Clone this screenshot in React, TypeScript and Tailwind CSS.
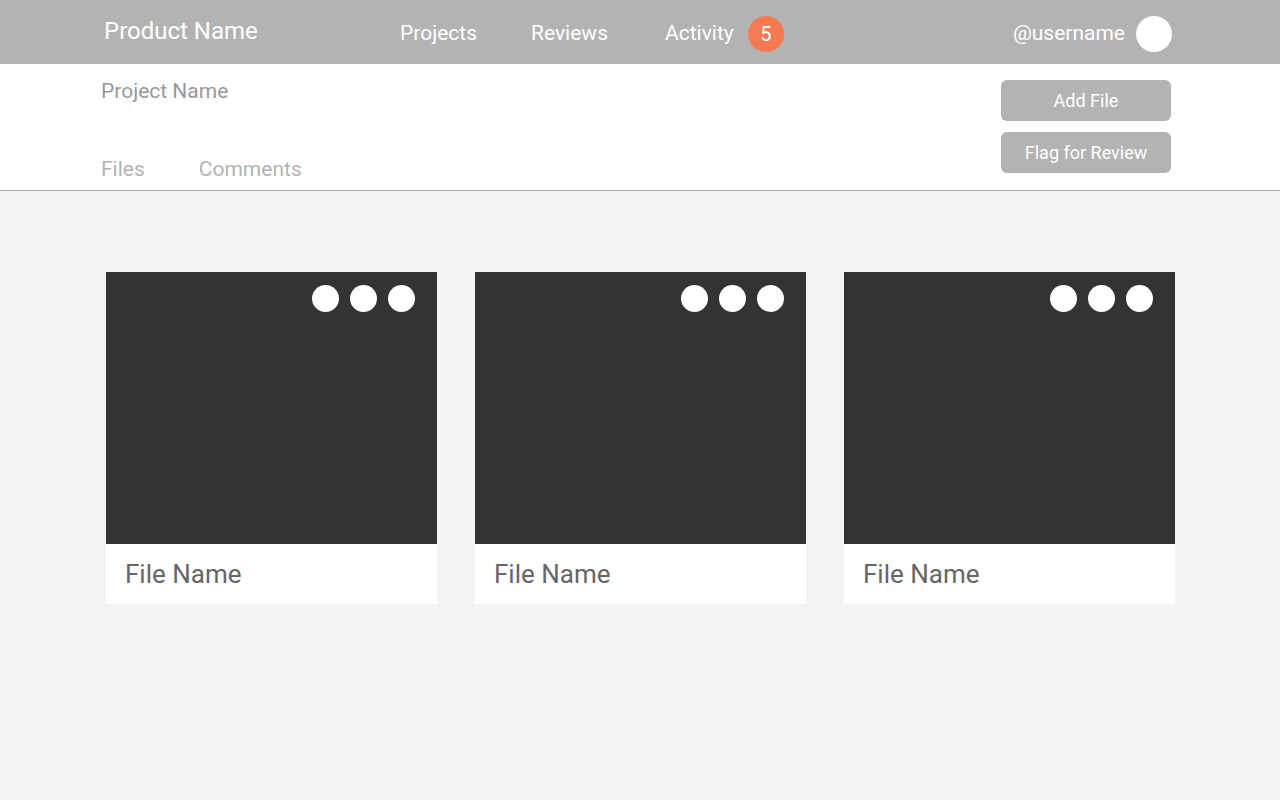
import React from "react";

const files = ["File Name", "File Name", "File Name"];

function FileCard({ name }: { name: string }) {
  return (
    <div className="flex flex-col">
      <div className="relative h-[272px] bg-[#333333]">
        {/* action dots */}
        <div className="absolute right-[22px] top-[13px] flex gap-[11px]">
          <span className="h-[27px] w-[27px] rounded-full bg-white" />
          <span className="h-[27px] w-[27px] rounded-full bg-white" />
          <span className="h-[27px] w-[27px] rounded-full bg-white" />
        </div>
      </div>
      <div className="flex h-[60px] items-center bg-white px-[19px]">
        <span className="text-[26px] text-[#666666]">{name}</span>
      </div>
    </div>
  );
}

export default function App() {
  return (
    <div
      className="flex min-h-[800px] flex-col bg-[#f3f3f3]"
      style={{ fontFamily: "Roboto, 'Liberation Sans', sans-serif" }}
    >
      {/* Top bar */}
      <header className="flex h-16 items-center bg-[#b3b3b3] pl-[104px] pr-[108px] pt-1 text-white">
        <div className="w-[296px] pb-[6px] text-[24px]">Product Name</div>
        <nav className="flex items-center text-[21px]">
          <span>Projects</span>
          <span className="ml-[54px]">Reviews</span>
          <span className="ml-[57px]">Activity</span>
          <span className="ml-[14px] flex h-9 w-9 items-center justify-center rounded-full bg-[#f47a52] text-[20px]">
            5
          </span>
        </nav>
        <div className="ml-auto flex items-center text-[21px]">
          <span>@username</span>
          <span className="ml-[11px] h-9 w-9 rounded-full bg-white" />
        </div>
      </header>

      {/* Project bar */}
      <div className="flex h-[127px] border-b border-[#b3b3b3] bg-white pl-[101px] pr-[109px]">
        <div className="flex flex-col">
          <div className="mt-[12px] text-[21px] text-[#999999]">Project Name</div>
          <div className="mt-[46px] flex gap-[54px] text-[21px] text-[#b3b3b3]">
            <span>Files</span>
            <span>Comments</span>
          </div>
        </div>
        <div className="ml-auto mt-4 flex flex-col gap-[11px]">
          <button className="h-[41px] w-[170px] rounded-[6px] bg-[#b3b3b3] text-[18px] text-white">
            Add File
          </button>
          <button className="h-[41px] w-[170px] rounded-[6px] bg-[#b3b3b3] text-[18px] text-white">
            Flag for Review
          </button>
        </div>
      </div>

      {/* Files grid */}
      <main className="grid grid-cols-[331px_331px_331px] gap-[38px] pl-[106px] pt-[81px]">
        {files.map((f, i) => (
          <FileCard key={i} name={f} />
        ))}
      </main>
    </div>
  );
}
